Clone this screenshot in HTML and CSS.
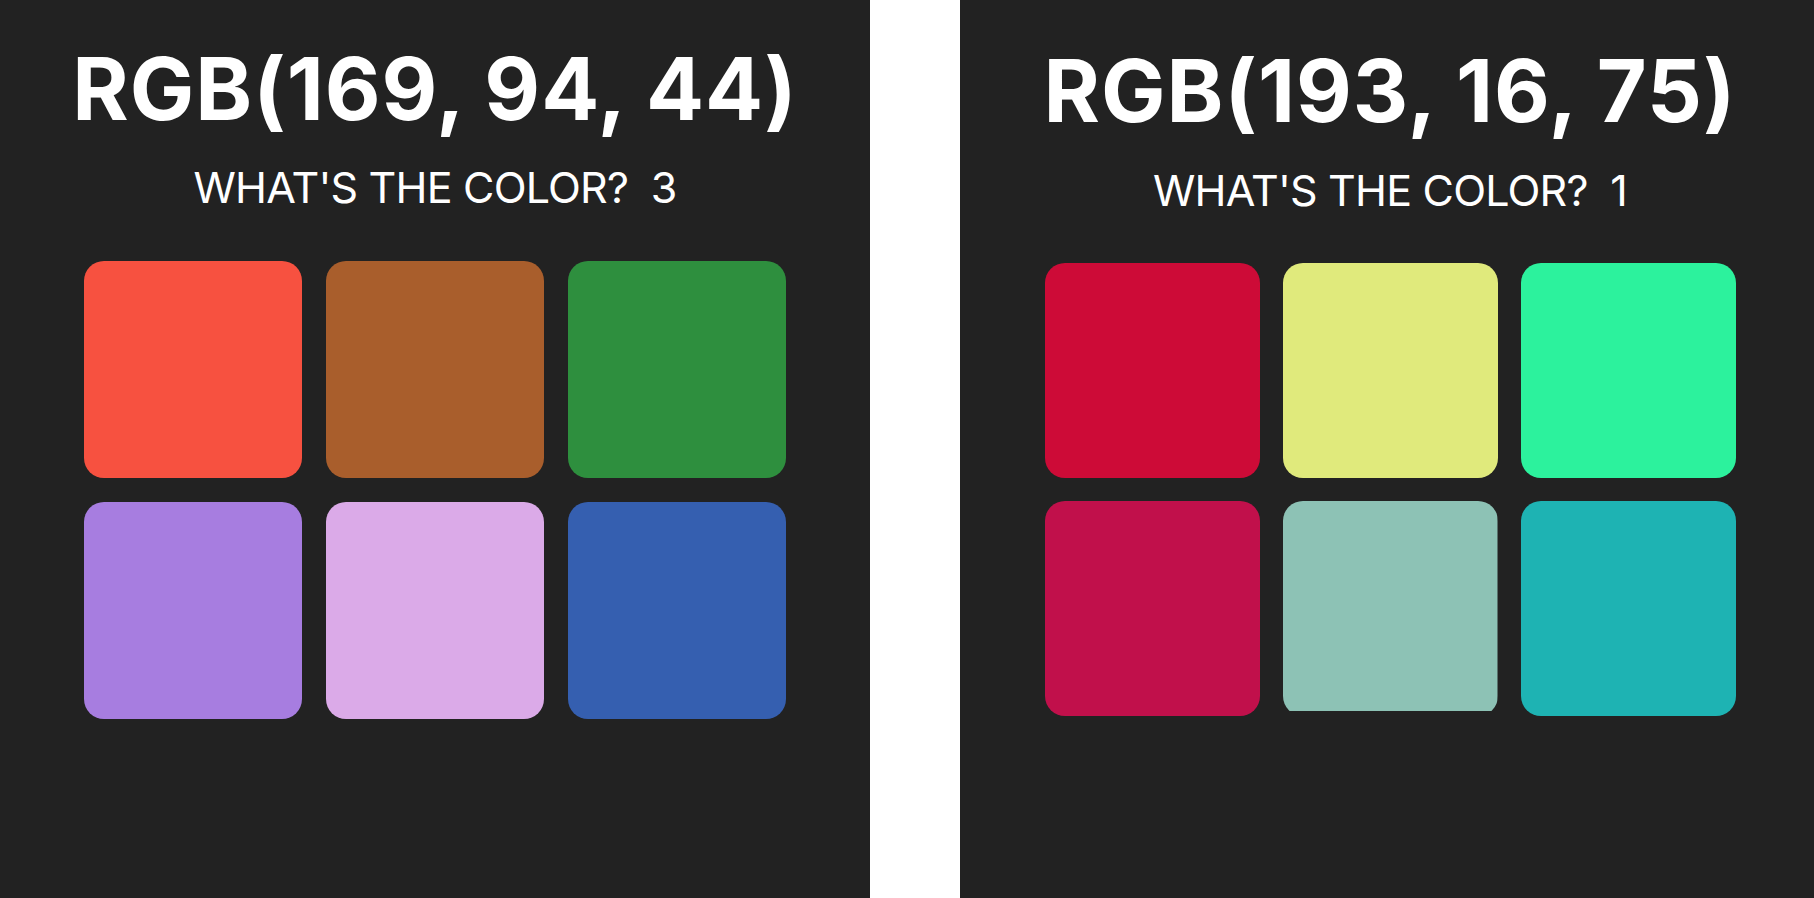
FILE: index.html
```html
<!DOCTYPE html>
<html lang="en">
<head>
<meta charset="utf-8">
<title>What's the color?</title>
<link rel="stylesheet" href="styles.css">
</head>
<body>
<div class="page">
  <section class="panel">
    <h1 class="title">RGB(169, 94, 44)</h1>
    <p class="subtitle">WHAT'S THE COLOR?&nbsp; 3</p>
    <div class="grid">
      <div class="swatch" style="background:#f75140"></div>
      <div class="swatch" style="background:#a95e2c"></div>
      <div class="swatch" style="background:#2e8f3e"></div>
      <div class="swatch" style="background:#a77de0"></div>
      <div class="swatch" style="background:#dbaae8"></div>
      <div class="swatch" style="background:#355fb0"></div>
    </div>
  </section>
  <div class="divider"></div>
  <section class="panel panel--alt">
    <h1 class="title">RGB(193, 16, 75)</h1>
    <p class="subtitle">WHAT'S THE COLOR?&nbsp; 1</p>
    <div class="grid">
      <div class="swatch" style="background:#cd0b37"></div>
      <div class="swatch" style="background:#e0ea7c"></div>
      <div class="swatch" style="background:#2cf29d"></div>
      <div class="swatch" style="background:#c1104b"></div>
      <div class="swatch swatch--clipped" style="background:#8dc2b5"></div>
      <div class="swatch" style="background:#1eb3b3"></div>
    </div>
  </section>
</div>
</body>
</html>
```

FILE: styles.css
```css
html, body {
  margin: 0;
  padding: 0;
  background: #ffffff;
}

.page {
  display: flex;
  height: 898px;
  font-family: Inter, "Liberation Sans", sans-serif;
  color: #ffffff;
}

.panel {
  width: 870px;
  flex: none;
  background: #222222;
  display: flex;
  flex-direction: column;
  align-items: center;
  padding-top: 46px;
  box-sizing: border-box;
}

.divider {
  width: 90px;
  flex: none;
  background: #ffffff;
}

.panel--alt {
  flex: 1;
  width: auto;
  padding-top: 48px;
  padding-left: 6px;
}

.title {
  margin: 0;
  font-size: 86px;
  line-height: 1;
  font-weight: 700;
  letter-spacing: 1px;
}

.subtitle {
  margin: 34px 0 0;
  font-size: 43px;
  line-height: 1;
  font-weight: 400;
  letter-spacing: -0.8px;
}

.panel--alt .subtitle {
  margin-top: 35px;
}

.grid {
  margin-top: 52px;
  display: grid;
  grid-template-columns: repeat(3, 218px);
  grid-auto-rows: 217px;
  gap: 24px;
}

.panel--alt .grid {
  margin-top: 51px;
  grid-template-columns: repeat(3, 215px);
  grid-auto-rows: 215px;
  gap: 23px;
}

.swatch {
  border-radius: 20px;
}

.swatch--clipped {
  clip-path: inset(0 0 5px 0);
}
```
